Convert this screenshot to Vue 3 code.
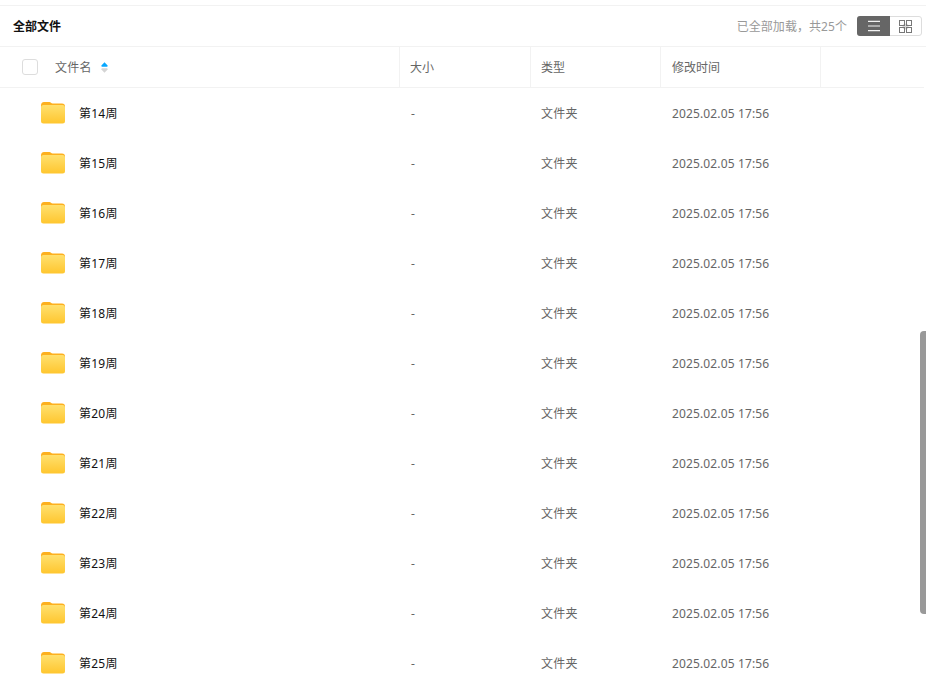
<script setup>
const weeks = Array.from({ length: 12 }, (_, i) => `第${14 + i}周`)
</script>

<template>
  <div class="page">
    <header class="top">
      <div class="title">全部文件</div>
      <div class="right">
        <span class="count">已全部加载，共25个</span>
        <div class="switch">
          <span class="sw active">
            <svg width="12" height="12" viewBox="0 0 12 12"><path d="M0 1.300h12M0 6h12M0 10.700h12" stroke="#f2f2f2" stroke-width="1.200" fill="none"/></svg>
          </span>
          <span class="sw">
            <svg width="13" height="13" viewBox="0 0 13 13" fill="none" stroke="#777">
              <circle cx="6.500" cy="6.500" r="3" fill="#d8d8d8" stroke="none"/>
              <rect x=".5" y=".5" width="5" height="5"/><rect x="7.500" y=".5" width="5" height="5"/><rect x=".5" y="7.500" width="5" height="5"/><rect x="7.500" y="7.500" width="5" height="5"/>
            </svg>
          </span>
        </div>
      </div>
    </header>
    <div class="thead">
      <div class="c c-name">
        <span class="check"></span>
        <span class="th-name">文件名</span>
        <svg class="sort" width="7" height="11" viewBox="0 0 7 11">
          <path d="M3.500 0.300 6.600 3.500Q7 4.600 6 4.800H1Q0 4.600 .4 3.500z" fill="#06a7ff"/>
          <path d="M3.500 10.700 6.600 7.500Q7 6.400 6 6.200H1Q0 6.400 .4 7.500z" fill="#d4d4d4"/>
        </svg>
      </div>
      <div class="c c-size">大小</div>
      <div class="c c-type">类型</div>
      <div class="c c-time">修改时间</div>
      <div class="c c-rest"></div>
    </div>
    <div class="row" v-for="w in weeks" :key="w">
      <div class="r-name">
        <svg class="folder" width="26" height="24" viewBox="0 0 26 24">
          <defs>
            <linearGradient id="fg" x1="0" y1="0" x2="0" y2="1">
              <stop offset="0" stop-color="#ffe06e"/>
              <stop offset="1" stop-color="#ffc62e"/>
            </linearGradient>
          </defs>
          <path d="M1 4.500C1 2.500 2 1 4 1h5.500c1.200 0 1.800 1.500 3 1.500H22c2 0 3 1.200 3 3V10H1z" fill="#fdb01f"/>
          <rect x="1" y="4" width="24" height="18.500" rx="2.500" fill="url(#fg)"/>
        </svg>
        <span class="fname">{{ w }}</span>
      </div>
      <div class="r-size">-</div>
      <div class="r-type">文件夹</div>
      <div class="r-time">2025.02.05 17:56</div>
    </div>
    <div class="scrollbar"></div>
  </div>
</template>

<style scoped>
.page {
  position: relative;
  width: 926px;
  height: 682px;
  overflow: hidden;
  background: #fff;
  padding-top: 5px;
  box-sizing: border-box;
  font-family: "Noto Sans", "Noto Sans CJK SC", sans-serif;
  font-size: 12px;
  color: #666;
}
.top {
  height: 40px;
  border-top: 1px solid #f2f2f2;
  border-bottom: 1px solid #f2f2f2;
  display: flex;
  align-items: center;
  justify-content: space-between;
  padding: 0 4px 0 13px;
}
.title { font-weight: 700; color: #111; font-size: 12px; }
.right { display: flex; align-items: center; gap: 10px; }
.count { color: #999; letter-spacing: .06px; }
.switch {
  display: flex;
  width: 65px;
  height: 20px;
  border: 1px solid #ddd;
  border-radius: 3px;
  box-sizing: border-box;
}
.sw { flex: 1; display: flex; align-items: center; justify-content: center; }
.sw.active {
  flex: 0 0 33px;
  background: #666;
  border-radius: 3px 0 0 3px;
  margin: -1px 0 -1px -1px;
}
.thead {
  height: 40px;
  width: 924px;
  display: flex;
  border-bottom: 1px solid #f2f2f2;
}
.c {
  box-sizing: border-box;
  display: flex;
  align-items: center;
  padding-left: 10px;
  border-right: 1px solid #f2f2f2;
}
.c-name { width: 400px; padding-left: 22px; }
.c-size { width: 131px; }
.c-type { width: 130px; }
.c-time { width: 160px; padding-left: 11px; }
.c-rest { flex: 1; border-right: 0; }
.check {
  width: 14px;
  height: 14px;
  border: 1px solid #ddd;
  border-radius: 3px;
  margin-right: 17px;
}
.th-name { letter-spacing: .2px; }
.sort { margin-left: 9px; }
.row {
  display: flex;
  align-items: center;
  height: 50px;
}
.r-name { width: 400px; display: flex; align-items: center; padding-left: 40px; box-sizing: border-box; }
.folder { margin-right: 13px; }
.fname { color: #111; letter-spacing: .25px; }
.r-size { width: 131px; padding-left: 11px; box-sizing: border-box; }
.r-type { width: 131px; padding-left: 10px; box-sizing: border-box; letter-spacing: .25px; }
.r-time { padding-left: 10px; letter-spacing: .13px; }
.scrollbar {
  position: absolute;
  right: 0;
  top: 331px;
  width: 6px;
  height: 283px;
  background: #999;
  border-radius: 4px 0 0 4px;
}
</style>

<style>
body { margin: 0; }
</style>
